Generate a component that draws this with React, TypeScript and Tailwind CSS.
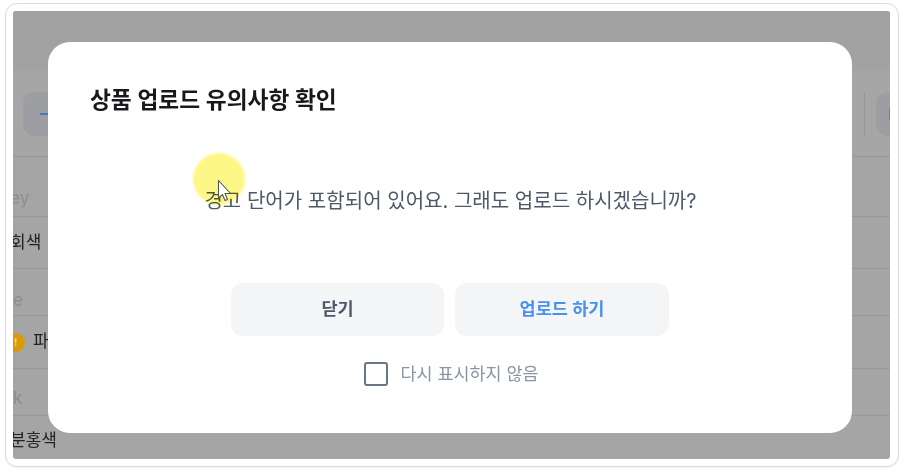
const FONT = "font-['Inter','Noto_Sans_CJK_KR',sans-serif]"

function Background() {
  return (
    <div className="flex h-full flex-col bg-[#a5a5a5]">
      <div className="h-[60px] shrink-0 bg-[#a2a2a2]" />
      {/* toolbar */}
      <div className="flex h-[86px] shrink-0 items-center justify-between border-b border-[#989898] bg-[#a6a6a6]">
        <div className="ml-[10px] flex h-[44px] w-[40px] items-center rounded-xl bg-[#9c9ea1] pl-[17px]">
          <span className="h-[2px] w-[12px] bg-[#4a78b8]" />
        </div>
        <div className="flex items-center gap-[11px]">
          <span className="h-[44px] w-px bg-[#969696]" />
          <div className="flex h-[44px] w-[14px] items-center justify-end rounded-l-xl bg-[#9c9ea1]">
            <span className="h-[12px] w-px bg-[#6f7fa8]" />
          </div>
        </div>
      </div>
      <div className="flex h-[60px] shrink-0 items-end border-b border-[#989898] pb-[6px]">
        <span className="-ml-[3px] text-[17px] font-medium leading-[24px] text-[#909090]">ey</span>
      </div>
      <div className="flex h-[52px] shrink-0 items-center border-b border-[#989898]">
        <span className="-ml-[3px] pt-[1px] text-[17px] text-[#222]">회색</span>
      </div>
      <div className="flex h-[47px] shrink-0 items-end border-b border-[#989898] pb-[3px]">
        <span className="text-[17px] font-medium leading-[24px] text-[#909090]">e</span>
      </div>
      <div className="flex h-[53px] shrink-0 items-center border-b border-[#989898]">
        <span className="-ml-[7px] flex h-[19px] w-[19px] items-center justify-center rounded-full bg-[#d99a06] text-[11px] font-bold text-[#f0d080]">!</span>
        <span className="ml-[8px] text-[17px] text-[#222]">파</span>
      </div>
      <div className="flex h-[47px] shrink-0 items-end border-b border-[#989898] pb-[5px]">
        <span className="text-[17px] font-medium leading-[24px] text-[#909090]">k</span>
      </div>
      <div className="flex flex-1 items-center">
        <span className="-ml-[3px] pt-[6px] text-[17px] text-[#222]">분홍색</span>
      </div>
    </div>
  )
}

export default function App() {
  return (
    <div className={`h-[474px] w-[904px] overflow-hidden bg-white pl-[5px] pt-[3px] blur-[0.35px] ${FONT}`}>
      <div className="h-[464px] w-[894px] rounded-[12px] border border-[#dcdcdc] bg-white pl-[7px] pt-[7px] shadow-[0_1px_1px_rgba(0,0,0,0.06)]">
        <div className="relative h-[448px] w-[877px] overflow-hidden rounded-[3px]">
          <Background />

          {/* modal */}
          <div className="absolute left-[35px] top-[31px] flex h-[391px] w-[804px] flex-col rounded-[22px] bg-white">
            <h2 className="pl-[42px] pt-[43px] text-[22.7px] font-semibold leading-[30px] text-[#17191c]">상품 업로드 유의사항 확인</h2>
            <p className="mt-[72px] pl-[1px] text-center text-[20.05px] leading-[28px] text-[#4e5968]">경고 단어가 포함되어 있어요. 그래도 업로드 하시겠습니까?</p>
            <div className="mt-[68px] flex justify-center gap-[11px]">
              <button className="h-[53px] w-[213px] rounded-[12px] bg-[#f3f5f7] text-[17.5px] font-semibold text-[#4e5968]">닫기</button>
              <button className="h-[53px] w-[214px] rounded-[12px] bg-[#f3f5f7] text-[17.5px] font-semibold text-[#4a90f0]">업로드 하기</button>
            </div>
            <label className="mt-[26px] flex items-center justify-center gap-[13px] pl-[2px]">
              <span className="h-[24px] w-[24px] rounded-[3px] border-2 border-[#6b7684] bg-white" />
              <span className="text-[17.4px] leading-[24px] text-[#8b95a1]">다시 표시하지 않음</span>
            </label>
          </div>

          {/* cursor highlight */}
          <div className="absolute left-[180px] top-[142px] h-[52px] w-[52px] rounded-full bg-[#fdf67a] opacity-90 blur-[1px] mix-blend-multiply" />
          <svg className="absolute left-[204px] top-[168px]" width="16" height="26" viewBox="0 0 16 26">
            <path d="M1.5 1.5 V19 L5.5 15.5 L8 21.5 L10.5 20.5 L8 14.5 H13.5 Z" fill="#fff" stroke="#555" strokeWidth="1.1" strokeLinejoin="round" />
          </svg>
        </div>
      </div>
    </div>
  )
}
